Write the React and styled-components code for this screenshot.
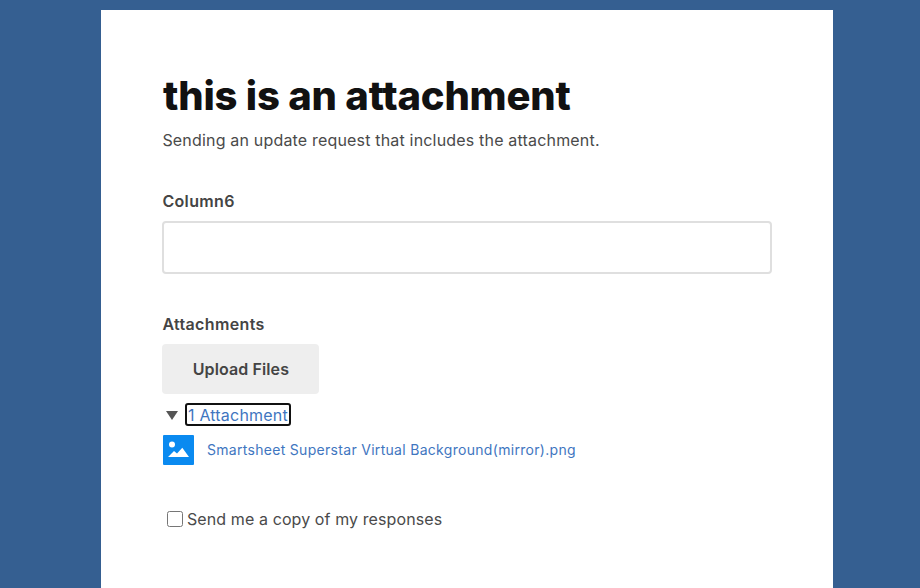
import React from "react";
import styled, { createGlobalStyle } from "styled-components";

const GlobalStyle = createGlobalStyle`
  html, body {
    margin: 0;
    padding: 0;
    height: 100%;
    overflow: hidden;
    background: #355f91;
  }
  body {
    font-family: Inter, "Liberation Sans", sans-serif;
    color: #444444;
  }
`;

const Page = styled.div`
  padding: 10px 0 0 101px;
  display: flex;
  height: 588px;
  box-sizing: border-box;
`;

const Card = styled.main`
  width: 732px;
  background: #ffffff;
  box-sizing: border-box;
  padding: 60px 61px 0 61.4px;
`;

const Title = styled.h1`
  margin: 0;
  padding-left: 0.6px;
  font-family: Inter, sans-serif;
  font-weight: 800;
  font-size: 40px;
  line-height: 52px;
  letter-spacing: -0.2px;
  font-variant-ligatures: none;
  color: #111111;
`;

const Description = styled.p`
  margin: 6px 0 0;
  font-size: 16px;
  line-height: 24px;
  letter-spacing: 0.18px;
  color: #4a4a4a;
`;

const Field = styled.section`
  margin-top: ${(p) => p.$top}px;
`;

const Label = styled.label`
  display: block;
  font-size: 16px;
  font-weight: 600;
  line-height: 24px;
  letter-spacing: 0.35px;
  color: #444444;
`;

const TextInput = styled.input`
  display: block;
  width: 100%;
  height: 53px;
  margin-top: 8px;
  box-sizing: border-box;
  border: 2px solid #dfdfdf;
  border-radius: 4px;
  background: #ffffff;
  outline: none;
`;

const UploadButton = styled.button`
  display: block;
  width: 157px;
  height: 50px;
  margin-top: 8px;
  border: none;
  border-radius: 4px;
  background: #eeeeee;
  color: #444444;
  font-family: inherit;
  font-size: 16px;
  font-weight: 600;
  letter-spacing: 0.1px;
`;

const Toggle = styled.div`
  display: flex;
  align-items: center;
  margin-top: 9px;
  padding-left: 3.6px;
  gap: 7px;
`;

const Caret = styled.span`
  width: 0;
  height: 0;
  border-left: 6px solid transparent;
  border-right: 6px solid transparent;
  border-top: 9px solid #555555;
  margin-top: 2px;
`;

const ToggleLink = styled.a`
  display: block;
  box-sizing: border-box;
  height: 23px;
  line-height: 21px;
  padding: 0 1px;
  border: 2px solid #111111;
  border-radius: 3px;
  font-size: 16px;
  letter-spacing: 0.2px;
  color: #3f76bf;
`;

const FileRow = styled.div`
  display: flex;
  align-items: center;
  gap: 13px;
  margin-top: 9px;
  padding-left: 0.6px;
`;

const FileIcon = styled.svg`
  display: block;
  width: 31px;
  height: 30px;
`;

const FileName = styled.a`
  padding-bottom: 2px;
  font-size: 14px;
  letter-spacing: 0.3px;
  color: #3f76bf;
`;

const CopyRow = styled.label`
  display: flex;
  align-items: center;
  gap: 4px;
  margin-top: 42px;
  padding-left: 4.6px;
  font-size: 16px;
  line-height: 24px;
  letter-spacing: 0.1px;
  color: #4a4a4a;
`;

const CheckBox = styled.input`
  width: 16px;
  height: 16px;
  margin: 0;
`;

export default function App() {
  return (
    <>
      <GlobalStyle />
      <Page>
        <Card>
          <Title>this is an attachment</Title>
          <Description>
            Sending an update request that includes the attachment.
          </Description>
          <Field $top={37}>
            <Label>Column6</Label>
            <TextInput type="text" />
          </Field>
          <Field $top={38}>
            <Label>Attachments</Label>
            <UploadButton>Upload Files</UploadButton>
            <Toggle>
              <Caret />
              <ToggleLink>1 Attachment</ToggleLink>
            </Toggle>
            <FileRow>
              <FileIcon viewBox="0 0 31 30">
                <rect width="31" height="30" rx="1" fill="#0a8af0" />
                <circle cx="9" cy="9.5" r="3" fill="#ffffff" />
                <path
                  d="M5 22 L11 16 L14 18.5 L19.3 12.7 L26 22 Z"
                  fill="#ffffff"
                />
              </FileIcon>
              <FileName>Smartsheet Superstar Virtual Background(mirror).png</FileName>
            </FileRow>
            <CopyRow>
              <CheckBox type="checkbox" />
              Send me a copy of my responses
            </CopyRow>
          </Field>
        </Card>
      </Page>
    </>
  );
}
